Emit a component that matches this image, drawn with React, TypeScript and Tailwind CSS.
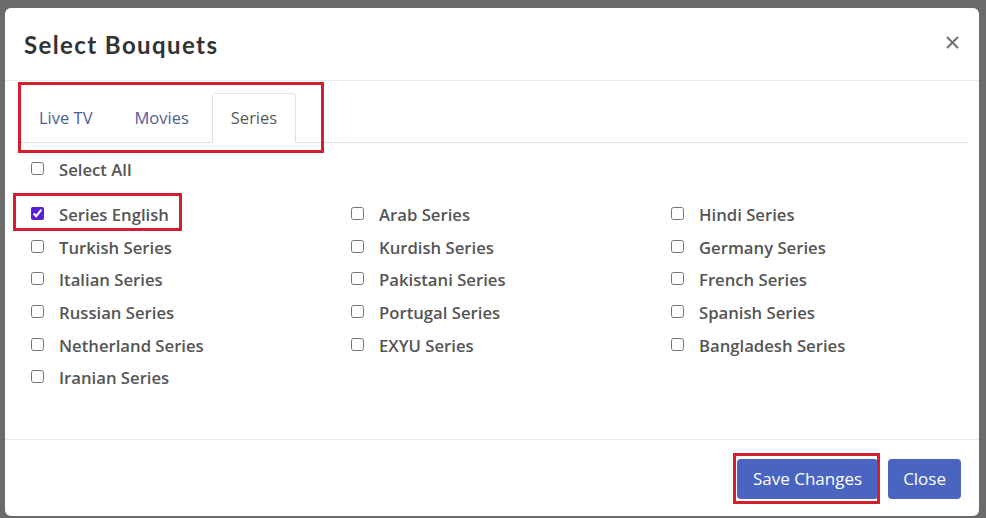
import { useState } from "react";

const TABS = ["Live TV", "Movies", "Series"];

const SERIES = [
  "Series English",
  "Arab Series",
  "Hindi Series",
  "Turkish Series",
  "Kurdish Series",
  "Germany Series",
  "Italian Series",
  "Pakistani Series",
  "French Series",
  "Russian Series",
  "Portugal Series",
  "Spanish Series",
  "Netherland Series",
  "EXYU Series",
  "Bangladesh Series",
  "Iranian Series",
];

function Check({
  label,
  checked,
  onChange,
  highlight,
}: {
  label: string;
  checked: boolean;
  onChange: () => void;
  highlight?: boolean;
}) {
  return (
    <label className="relative flex items-start gap-[15px] h-[24px] cursor-pointer">
      <input
        type="checkbox"
        checked={checked}
        onChange={onChange}
        className="mt-[4px] m-0 w-[13px] h-[13px] shrink-0 accent-[#5b1fd6]"
      />
      <span className="leading-[24px]">{label}</span>
      {highlight && (
        <span className="absolute left-[-18px] top-[-10px] w-[169px] h-[38px] border-[3px] border-[#d31f2d] pointer-events-none" />
      )}
    </label>
  );
}

export default function App() {
  const [tab, setTab] = useState("Series");
  const [picked, setPicked] = useState<Set<string>>(new Set(["Series English"]));

  const toggle = (name: string) =>
    setPicked((prev) => {
      const next = new Set(prev);
      if (next.has(name)) next.delete(name);
      else next.add(name);
      return next;
    });

  const allPicked = picked.size === SERIES.length;

  return (
    <div className="w-[986px] h-[518px] bg-[#6b6b6b] pt-[8px] pl-[5px] overflow-hidden font-['Open_Sans',sans-serif] text-[16px] text-[#4a4a4a]">
      <div className="w-[974px] h-[508px] bg-white rounded-[6px] flex flex-col">
        {/* header */}
        <div className="h-[73px] shrink-0 flex items-center justify-between pl-[19px] pr-[20px] border-b border-[#e9ecef]">
          <h2 className="font-['Lato',sans-serif] font-bold text-[24px] text-[#333] tracking-[1.4px] pt-[1px]">
            Select Bouquets
          </h2>
          <button className="text-[#777] leading-none mb-[3px]">
            <svg width="13" height="13" viewBox="0 0 13 13" stroke="currentColor" strokeWidth="2.2">
              <path d="M1 1l11 11M12 1L1 12" />
            </svg>
          </button>
        </div>

        {/* body */}
        <div className="flex-1 pt-[12px]">
          <div className="relative ml-[15px] mr-[11px] flex gap-[4px] border-b border-[#dee2e6] text-[16.5px]">
            {TABS.map((t) => (
              <button
                key={t}
                onClick={() => setTab(t)}
                className={
                  t === tab
                    ? "h-[50px] px-[18px] mb-[-1px] bg-white border border-[#dee2e6] border-b-white rounded-t-[4px] text-[#5a5a5a]"
                    : "h-[50px] px-[18px] mb-[-1px] border border-transparent text-[#505c94]"
                }
              >
                {t}
              </button>
            ))}
            <span className="absolute left-[-2px] top-[-11px] w-[306px] h-[71px] border-[3px] border-[#d31f2d] pointer-events-none" />
          </div>

          <div className="pl-[26px] pt-[15px] font-semibold text-[16.7px] text-[#555]">
            <Check
              label="Select All"
              checked={allPicked}
              onChange={() => setPicked(allPicked ? new Set() : new Set(SERIES))}
            />
            <div className="grid grid-cols-[320px_320px_320px] gap-y-[8.7px] mt-[21px]">
              {SERIES.map((name) => (
                <Check
                  key={name}
                  label={name}
                  checked={picked.has(name)}
                  onChange={() => toggle(name)}
                  highlight={name === "Series English"}
                />
              ))}
            </div>
          </div>
        </div>

        {/* footer */}
        <div className="h-[77px] shrink-0 border-t border-[#e9ecef] flex items-center justify-end gap-[10px] pr-[18px] pt-[1px]">
          <div className="relative">
            <button className="h-[40px] px-[16px] rounded-[4px] bg-[#4a64c2] text-white text-[17px]">
              Save Changes
            </button>
            <span className="absolute left-[-4px] top-[-6px] w-[147px] h-[51px] border-[3px] border-[#d31f2d] pointer-events-none" />
          </div>
          <button className="h-[40px] px-[15px] rounded-[4px] bg-[#4a64c2] text-white text-[17px]">
            Close
          </button>
        </div>
      </div>
    </div>
  );
}
